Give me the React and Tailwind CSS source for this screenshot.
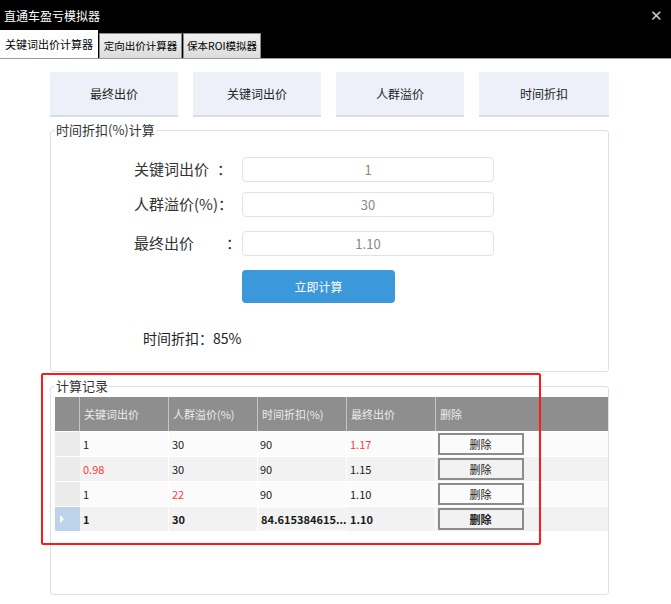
import React, { useState } from "react";

const font = { fontFamily: '"Noto Sans CJK SC", "Noto Sans", sans-serif' };

const records = [
  { kw: "1", crowd: "30", time: "90", final: "1.17", red: "final" },
  { kw: "0.98", crowd: "30", time: "90", final: "1.15", red: "kw" },
  { kw: "1", crowd: "22", time: "90", final: "1.10", red: "crowd" },
  { kw: "1", crowd: "30", time: "84.615384615...", final: "1.10", red: "", current: true },
];

const TopButton = ({ label, wide }) => (
  <button
    className={`${wide ? "w-[130px]" : "w-[128px]"} h-[45px] bg-[#edf0f8] border-b-2 border-[#d6dce8] text-[12px] text-[#222]`}
  >
    {label}
  </button>
);

const Field = ({ label, colon, value }) => (
  <div className="flex items-center">
    <div className="w-[108px] flex text-[15px] text-[#333]">
      <span>{label}</span>
      <span className={colon}>：</span>
    </div>
    <input
      readOnly
      value={value}
      className="w-[252px] h-[25px] border border-[#e2e2e2] rounded-[4px] text-center text-[13px] text-[#888] outline-none"
    />
  </div>
);

export default function App() {
  const [rows, setRows] = useState(records);

  const cellText = (row, key) =>
    row.red === key ? "text-[#ff3b3b]" : "text-[#1a1a1a]";

  return (
    <div className="w-[671px] h-[604px] bg-white flex flex-col overflow-hidden" style={font}>
      {/* title bar */}
      <div className="h-[31px] bg-black flex items-center justify-between pl-[4px] pr-[8px]">
        <span className="text-[12px] text-white">直通车盈亏模拟器</span>
        <span className="text-[#ccc] text-[15px]">✕</span>
      </div>

      {/* tabs */}
      <div className="h-[28px] bg-black flex items-end border-b border-[#9a9a9a]">
        <div className="h-[28px] w-[98px] bg-white flex items-center justify-center text-[11px] text-black">
          关键词出价计算器
        </div>
        <div className="h-[25px] w-[83px] ml-[1px] bg-gradient-to-b from-[#f0f0f0] to-[#dcdcdc] border border-[#8a8a8a] border-b-0 flex items-center justify-center text-[10.5px] text-black">
          定向出价计算器
        </div>
        <div className="h-[25px] w-[78px] ml-[1px] bg-gradient-to-b from-[#f0f0f0] to-[#dcdcdc] border border-[#8a8a8a] border-b-0 flex items-center justify-center text-[10.5px] text-black">
          保本ROI模拟器
        </div>
      </div>

      <div className="pl-[50px] pt-[13px] flex flex-col">
        <div className="flex gap-[15px]">
          <TopButton label="最终出价" />
          <TopButton label="关键词出价" />
          <TopButton label="人群溢价" />
          <TopButton label="时间折扣" wide />
        </div>

        {/* group 1 */}
        <fieldset className="mt-[4px] w-[559px] h-[251px] border border-[#dde2e8] rounded-[3px]">
          <legend className="ml-[4px] px-[1px] text-[13px] text-[#333] leading-[18px]">时间折扣(%)计算</legend>
          <div className="flex flex-col pt-[18px] pl-[83px]">
            <Field label="关键词出价" colon="ml-[8px]" value="1" />
            <div className="h-[10px]" />
            <Field label="人群溢价(%)" colon="" value="30" />
            <div className="h-[14px]" />
            <Field label="最终出价" colon="ml-[32px]" value="1.10" />
            <div className="pl-[108px] pt-[14px]">
              <button className="w-[153px] h-[33px] bg-[#3a98db] rounded-[4px] text-white text-[12px]">
                立即计算
              </button>
            </div>
            <div className="pl-[9px] pt-[25px] text-[14px] text-[#222]">时间折扣：85%</div>
          </div>
        </fieldset>

        {/* group 2 */}
        <fieldset className="relative mt-[5px] w-[559px] h-[218px] border border-[#dde2e8] rounded-[3px]">
          <legend className="ml-[4px] px-[1px] text-[13px] text-[#333] leading-[18px]">计算记录</legend>
          <div className="pt-[2px] pl-[4px] text-[11px]">
            <div className="grid grid-cols-[25px_89px_89px_89px_89px_89px] h-[34px] bg-[#8e8e8e] text-[#ececec]">
              <div className="border-r border-[#c4c4c4]" />
              {["关键词出价", "人群溢价(%)", "时间折扣(%)", "最终出价", "删除"].map((h) => (
                <div key={h} className="flex items-center pl-[4px] border-r border-[#c4c4c4] last:border-r-0">
                  {h}
                </div>
              ))}
            </div>
            {rows.map((row, i) => (
              <div
                key={i}
                className={`grid grid-cols-[25px_89px_89px_89px_89px_89px] h-[25px] border-t border-white ${
                  i % 2 ? "bg-[#f1f2f1]" : "bg-[#fbfbfb]"
                } ${row.current ? "font-bold" : ""}`}
              >
                <div className={`flex items-center pl-[4px] ${row.current ? "bg-[#bcd3ea]" : "bg-[#ebebeb]"}`}>
                  {row.current && (
                    <svg width="6" height="10" viewBox="0 0 6 10">
                      <path d="M1 1 L5 5 L1 9 Z" fill="#fff" />
                    </svg>
                  )}
                </div>
                <div className={`flex items-center pl-[3px] border-r border-white ${cellText(row, "kw")}`}>{row.kw}</div>
                <div className={`flex items-center pl-[3px] border-r border-white ${cellText(row, "crowd")}`}>{row.crowd}</div>
                <div
                  className={`flex items-center pl-[2px] border-r border-white ${cellText(row, "time")} ${
                    row.current ? "border border-dotted border-[#555]" : ""
                  }`}
                >
                  {row.time}
                </div>
                <div className={`flex items-center pl-[3px] border-r border-white ${cellText(row, "final")}`}>{row.final}</div>
                <div className="flex items-center justify-center">
                  <button
                    onClick={() => setRows(rows.filter((_, j) => j !== i))}
                    className={`w-[86px] h-[22px] border-2 border-[#8c8c8c] text-[11px] text-[#222] ${
                      i % 2 ? "bg-[#f1f2f1]" : "bg-[#fbfbfb]"
                    }`}
                  >
                    删除
                  </button>
                </div>
              </div>
            ))}
          </div>
          {/* red annotation */}
          <div className="absolute left-[-10px] top-[-22px] w-[500px] h-[172px] border-2 border-[#ff1a1a] rounded-[2px] pointer-events-none" />
        </fieldset>
      </div>
    </div>
  );
}
